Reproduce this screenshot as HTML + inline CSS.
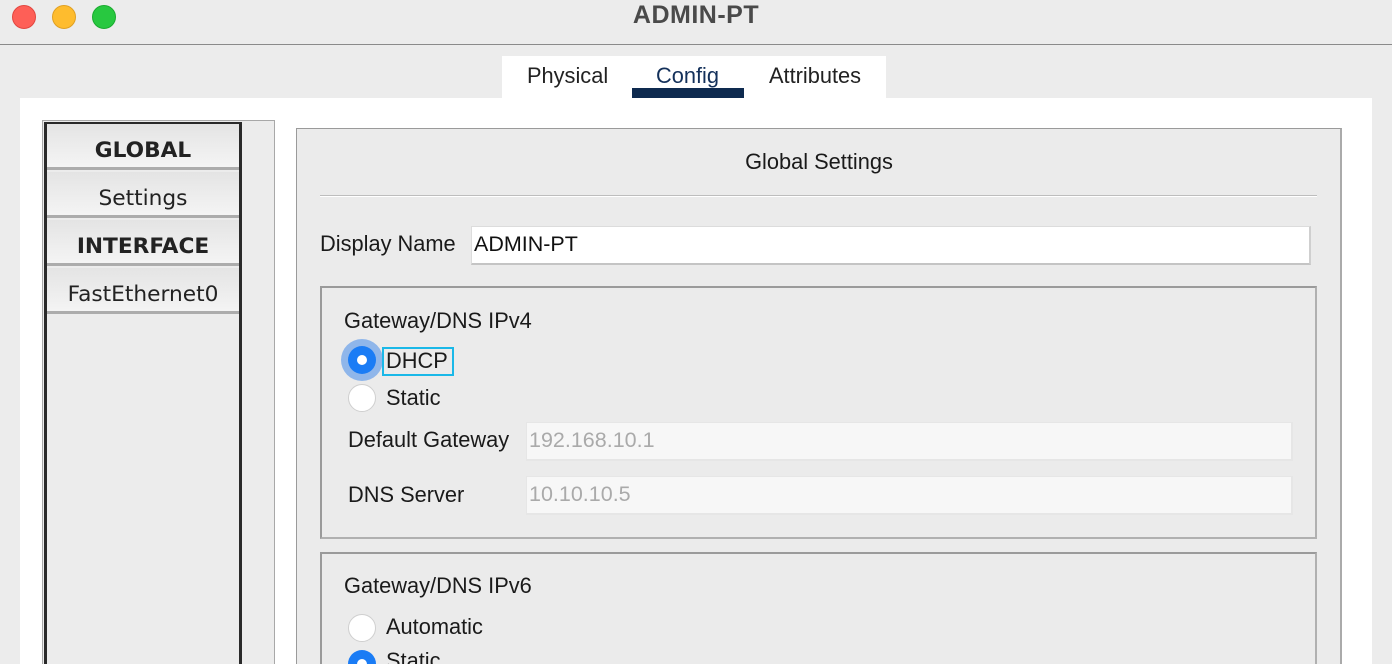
<!DOCTYPE html>
<html style="overflow:hidden;width:1392px;height:664px"><head><style>
*{margin:0;padding:0;box-sizing:border-box}
body{width:1392px;height:664px;overflow:hidden;background:#ececec;font-family:"Liberation Sans",Helvetica,sans-serif;color:#1a1a1a;position:relative}
.a{position:absolute}
.dot{position:absolute;top:5px;width:24px;height:24px;border-radius:50%}
.row{position:absolute;left:47px;width:192px;height:46px;background:linear-gradient(#e4e4e4,#f4f4f4);border-bottom:3px solid #acacac;font-family:"DejaVu Sans",Verdana,sans-serif;font-size:21.7px;text-align:center;line-height:53px;color:#222}
.b{font-weight:bold}
.inp{position:absolute;background:#fff;border:1px solid #dcdcdc;border-bottom:2px solid #c4c4c4;border-right:2px solid #cfcfcf;font-size:21.5px;padding-left:2px}
.dis{background:#f7f7f7;color:#aaa;border-color:#e6e6e6}
.t{position:absolute;font-size:21.8px;line-height:26px}
.box{position:absolute;border:2px solid #9a9a9a;border-right-color:#b0b0b0;border-bottom-color:#b0b0b0;background:#ebebeb}
.rad{position:absolute;width:28px;height:28px;border-radius:50%;background:#fff;border:1px solid #cfcfcf}
</style></head><body>
<div class="a" style="left:0;top:0;width:1392px;height:45px;background:#ececec;border-bottom:1px solid #8a8a8a"></div>
<div class="dot" style="left:12px;background:#fe5f57;border:1px solid #e2463f"></div>
<div class="dot" style="left:52px;background:#febc2e;border:1px solid #e0a022"></div>
<div class="dot" style="left:92px;background:#28c840;border:1px solid #1aab2f"></div>
<div class="a" style="left:0;width:1392px;top:1px;text-align:center;font-weight:bold;font-size:25px;color:#4a4a4a;letter-spacing:0.5px">ADMIN-PT</div>

<div class="a" style="left:20px;top:98px;width:1352px;height:566px;background:#fff"></div>
<div class="a" style="left:502px;top:56px;width:384px;height:42px;background:#fff"></div>
<div class="t" style="left:527px;top:63px;color:#222">Physical</div>
<div class="t" style="left:656px;top:63px;color:#13305a">Config</div>
<div class="a" style="left:632px;top:88px;width:112px;height:10px;background:#0e2a4f"></div>
<div class="t" style="left:769px;top:63px;color:#222">Attributes</div>

<div class="a" style="left:42px;top:120px;width:233px;height:544px;background:#ececec;border:1px solid #a8a8a8;border-bottom:none"></div>
<div class="a" style="left:44px;top:122px;width:198px;height:542px;border:3px solid #2a2a2a;border-bottom:none;background:#ececec"></div>
<div class="row b" style="top:124px">GLOBAL</div>
<div class="row" style="top:172px">Settings</div>
<div class="row b" style="top:220px">INTERFACE</div>
<div class="row" style="top:268px">FastEthernet0</div>

<div class="a" style="left:296px;top:128px;width:1046px;height:536px;background:#ebebeb;border:1px solid #9a9a9a;border-right:2px solid #aaa;border-bottom:none"></div>
<div class="t" style="left:296px;width:1046px;text-align:center;top:149px">Global Settings</div>
<div class="a" style="left:320px;top:195px;width:997px;height:2px;background:#bdbdbd;border-bottom:1px solid #fff"></div>
<div class="t" style="left:320px;top:231px">Display Name</div>
<div class="inp" style="left:471px;top:226px;width:840px;height:39px;line-height:35px;color:#111">ADMIN-PT</div>

<div class="box" style="left:320px;top:286px;width:997px;height:253px"></div>
<div class="t" style="left:344px;top:308px">Gateway/DNS IPv4</div>
<div class="a" style="left:341px;top:339px;width:42px;height:42px;border-radius:50%;background:#8fb6ea"></div>
<div class="a" style="left:348px;top:346px;width:28px;height:28px;border-radius:50%;background:#1a7cf5"></div>
<div class="a" style="left:357px;top:355px;width:10px;height:10px;border-radius:50%;background:#fff"></div>
<div class="a" style="left:382px;top:347px;width:72px;height:29px;border:2px solid #1ab8e8"></div>
<div class="t" style="left:386px;top:348px">DHCP</div>
<div class="rad" style="left:348px;top:384px"></div>
<div class="t" style="left:386px;top:385px">Static</div>
<div class="t" style="left:348px;top:427px">Default Gateway</div>
<div class="inp dis" style="left:526px;top:422px;width:767px;height:39px;line-height:35px">192.168.10.1</div>
<div class="t" style="left:348px;top:482px">DNS Server</div>
<div class="inp dis" style="left:526px;top:476px;width:767px;height:39px;line-height:35px">10.10.10.5</div>

<div class="box" style="left:320px;top:552px;width:997px;height:112px;border-bottom:none"></div>
<div class="t" style="left:344px;top:573px">Gateway/DNS IPv6</div>
<div class="rad" style="left:348px;top:614px"></div>
<div class="t" style="left:386px;top:614px">Automatic</div>
<div class="a" style="left:348px;top:650px;width:28px;height:28px;border-radius:50%;background:#1a7cf5"></div>
<div class="a" style="left:357px;top:659px;width:10px;height:10px;border-radius:50%;background:#fff"></div>
<div class="t" style="left:386px;top:648px">Static</div>
</body></html>
